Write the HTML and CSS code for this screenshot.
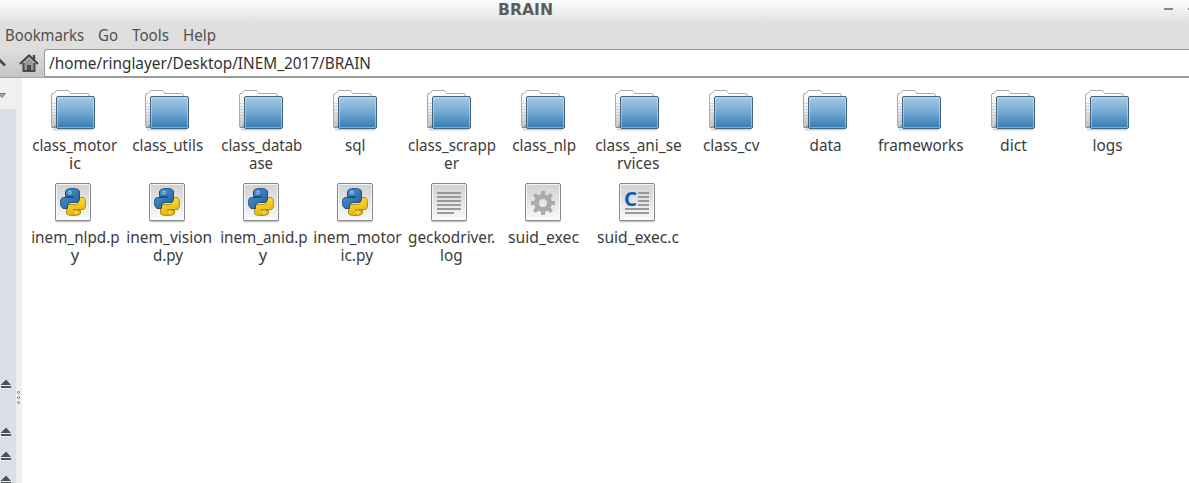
FILE: index.html
```html
<!DOCTYPE html>
<html lang="en">
<head>
<meta charset="utf-8">
<title>BRAIN</title>
<link rel="stylesheet" href="styles.css">
</head>
<body>
<svg class="defs" aria-hidden="true">
  <defs>
    <linearGradient id="blue" x2="0" y2="1"><stop offset="0" stop-color="#abcbe2"/><stop offset=".5" stop-color="#72a8d2"/><stop offset="1" stop-color="#337bb3"/></linearGradient>
    <linearGradient id="paper" x2="0" y2="1"><stop offset="0" stop-color="#d0d0d0"/><stop offset="1" stop-color="#fafafa"/></linearGradient>
    <linearGradient id="pyb" x2="1" y2="1"><stop offset="0" stop-color="#4b9ae0"/><stop offset="1" stop-color="#245a8d"/></linearGradient>
    <linearGradient id="pyy" x2=".3" y2="1"><stop offset="0" stop-color="#ffea3a"/><stop offset="1" stop-color="#e3b40e"/></linearGradient>
    <linearGradient id="tab" x2="0" y2="1"><stop offset="0" stop-color="#fff"/><stop offset=".4" stop-color="#f4f4f4"/><stop offset="1" stop-color="#c4c4c4"/></linearGradient>
  </defs>
  <symbol id="folder" viewBox="0 0 48 48">
    <path d="M4 41.400H44" stroke="#000" stroke-opacity=".18" stroke-width="2"/>
    <path d="M2.500 38V7Q2.500 5.500 4 5.500H5L6.500 3.500Q7 2.500 8 2.500H19Q20 2.500 20.500 3.500L21.500 5.500H38.500Q40.500 5.500 40.500 8V39.500H4Q2.500 39.500 2.500 38Z" fill="url(#tab)" stroke="#aaa"/>
    <path d="M3 15.500H7M3 18.500H7M3 21.500H7M3 24.500H7M3 27.500H7M3 30.500H7M3 33.500H7M3 36.500H7" stroke="#bbb" stroke-opacity=".5"/>
    <path d="M3 39.500Q7 40 7.500 36" fill="none" stroke="#777"/>
    <rect x="7.500" y="8.500" width="38" height="32" rx="1.500" fill="url(#blue)" stroke="#3f6482"/>
    <rect x="8.500" y="9.500" width="36" height="30" rx=".5" fill="none" stroke="#d5eaff" stroke-opacity=".45"/>
  </symbol>
  <symbol id="page" viewBox="0 0 48 48">
    <rect x="6" y="4" width="36" height="38.500" rx="2" fill="#000" opacity=".2"/>
    <rect x="6.500" y="3.500" width="35" height="37" rx="1.500" fill="url(#paper)" stroke="#858585"/>
    <rect x="7.500" y="4.500" width="33" height="35" rx=".5" fill="none" stroke="#fff" stroke-opacity=".75"/>
  </symbol>
  <symbol id="python" viewBox="0 0 48 48">
    <use href="#page"/>
    <path d="M29.500 17.500H34Q36.500 18 36.500 24Q36.500 29.500 34 29.500H24.500V30.500H31.500V33Q31.500 35.500 24 35.500Q17.500 35.500 17.500 33V28Q17.500 24.500 21 24.500H27Q29.500 24 29.500 21Z" fill="url(#pyy)" stroke="#b78b12"/>
    <path d="M18.500 28.500H14Q11.500 27 11.500 22.500Q11.500 17.500 14.500 17.500H24.500V16.500H16.500V12Q16.500 8.500 23.500 8.500Q30.500 8.500 30.500 12V19Q30.500 22.500 27 22.500H22Q18.500 23 18.500 26Z" fill="url(#pyb)" stroke="#1e4f7e"/>
    <circle cx="21" cy="12.500" r="1.400" fill="#3b7cb5" stroke="#b9dcf8" stroke-width=".9"/>
    <circle cx="27" cy="32" r="1.400" fill="#d5a50f" stroke="#fff08a" stroke-width=".9"/>
  </symbol>
  <symbol id="log" viewBox="0 0 48 48">
    <use href="#page"/>
    <path d="M12 13H36M12 17H36M12 21H36M12 25H36M12 29H36M12 33H29" stroke="#999" stroke-width="2"/>
  </symbol>
  <symbol id="gear" viewBox="0 0 48 48">
    <use href="#page"/>
    <g stroke="#aaa" stroke-width="4" transform="translate(24 23)">
      <path d="M0 -12V-6M0 12V6M-12 0H-6M12 0H6M-8.600 -8.600L-5 -5M8.600 8.600L5 5M8.600 -8.600L5 -5M-8.600 8.600L-5 5"/>
      <circle r="6.500" fill="none" stroke-width="5"/>
    </g>
  </symbol>
  <symbol id="eject" viewBox="0 0 11 10"><path d="M0 10V6L5.500 0L11 6V10Z" fill="#fff" opacity=".6"/><path d="M.5 6L6 .5L11 6ZM1 7H11V9H1Z" fill="#4d5155"/></symbol>
</svg>

<div class="window">
  <header class="chrome">
    <div class="titlebar">
      <svg class="title" viewBox="0 0 60 20"><text x="0" y="15" textLength="55" lengthAdjust="spacingAndGlyphs">BRAIN</text></svg>
      <span class="minimize"></span><span class="maximize"></span>
    </div>
    <svg class="menu" viewBox="0 0 240 28">
      <text x="5" y="21" textLength="79" lengthAdjust="spacingAndGlyphs">Bookmarks</text>
      <text x="98" y="21" textLength="20" lengthAdjust="spacingAndGlyphs">Go</text>
      <text x="132" y="21" textLength="37" lengthAdjust="spacingAndGlyphs">Tools</text>
      <text x="183" y="21" textLength="33" lengthAdjust="spacingAndGlyphs">Help</text>
    </svg>
  </header>
  <div class="toolbar">
    <svg class="nav" viewBox="0 0 44 28">
      <path d="M-5 16.500L0 11.500L5 16.500" fill="none" stroke="#4a4a4a" stroke-width="2.800"/>
      <path d="M23 15L29 9L35 15V22.500H31V17H27V22.500H23Z" fill="#999"/>
      <path d="M23.500 14V22H34.500V14" fill="none" stroke="#4a4a4a" stroke-width="2"/>
      <path d="M20 15L29 6.500L38 15M34 6V11" fill="none" stroke="#444" stroke-width="2.300"/>
      <path d="M27 22V16H31V22Z" fill="#4a4a4a"/>
    </svg>
    <div class="path"><svg viewBox="0 0 340 26"><text x="4" y="19" textLength="322" lengthAdjust="spacingAndGlyphs">/home/ringlayer/Desktop/INEM_2017/BRAIN</text></svg></div>
  </div>
  <div class="body">
    <aside class="side">
      <div class="side-head"><svg viewBox="0 0 16 31"><path d="M-1.500 15.500H5.500L2 19.500Z" fill="#aaa" stroke="#777"/></svg></div>
      <div class="places">
        <svg><use href="#eject"/></svg><svg><use href="#eject"/></svg><svg><use href="#eject"/></svg><svg><use href="#eject"/></svg>
      </div>
    </aside>
    <div class="splitter"><i></i><i></i><i></i></div>
    <main class="files">
      <figure><svg class="icon"><use href="#folder"/></svg><svg class="label"><text x="6.200" y="17" textLength="85" lengthAdjust="spacingAndGlyphs">class_motor</text><text x="43" y="35" textLength="12" lengthAdjust="spacingAndGlyphs">ic</text></svg></figure>
      <figure><svg class="icon"><use href="#folder"/></svg><svg class="label"><text x="12.200" y="17" textLength="71" lengthAdjust="spacingAndGlyphs">class_utils</text></svg></figure>
      <figure><svg class="icon"><use href="#folder"/></svg><svg class="label"><text x="7.300" y="17" textLength="81" lengthAdjust="spacingAndGlyphs">class_datab</text><text x="35" y="35" textLength="24" lengthAdjust="spacingAndGlyphs">ase</text></svg></figure>
      <figure><svg class="icon"><use href="#folder"/></svg><svg class="label"><text x="37" y="17" textLength="20.500" lengthAdjust="spacingAndGlyphs">sql</text></svg></figure>
      <figure><svg class="icon"><use href="#folder"/></svg><svg class="label"><text x="6" y="17" textLength="88" lengthAdjust="spacingAndGlyphs">class_scrapp</text><text x="42" y="35" textLength="15" lengthAdjust="spacingAndGlyphs">er</text></svg></figure>
      <figure><svg class="icon"><use href="#folder"/></svg><svg class="label"><text x="16.200" y="17" textLength="64" lengthAdjust="spacingAndGlyphs">class_nlp</text></svg></figure>
      <figure><svg class="icon"><use href="#folder"/></svg><svg class="label"><text x="5.200" y="17" textLength="86.500" lengthAdjust="spacingAndGlyphs">class_ani_se</text><text x="27" y="35" textLength="42.500" lengthAdjust="spacingAndGlyphs">rvices</text></svg></figure>
      <figure><svg class="icon"><use href="#folder"/></svg><svg class="label"><text x="19" y="17" textLength="56.500" lengthAdjust="spacingAndGlyphs">class_cv</text></svg></figure>
      <figure><svg class="icon"><use href="#folder"/></svg><svg class="label"><text x="31.500" y="17" textLength="32" lengthAdjust="spacingAndGlyphs">data</text></svg></figure>
      <figure><svg class="icon"><use href="#folder"/></svg><svg class="label"><text x="6" y="17" textLength="85.500" lengthAdjust="spacingAndGlyphs">frameworks</text></svg></figure>
      <figure><svg class="icon"><use href="#folder"/></svg><svg class="label"><text x="34" y="17" textLength="27" lengthAdjust="spacingAndGlyphs">dict</text></svg></figure>
      <figure><svg class="icon"><use href="#folder"/></svg><svg class="label"><text x="32.500" y="17" textLength="30" lengthAdjust="spacingAndGlyphs">logs</text></svg></figure>

      <figure><svg class="icon"><use href="#python"/></svg><svg class="label"><text x="5.200" y="17" textLength="88.500" lengthAdjust="spacingAndGlyphs">inem_nlpd.p</text><text x="44.700" y="35" textLength="8.500" lengthAdjust="spacingAndGlyphs">y</text></svg></figure>
      <figure><svg class="icon"><use href="#python"/></svg><svg class="label"><text x="6.200" y="17" textLength="86" lengthAdjust="spacingAndGlyphs">inem_vision</text><text x="33" y="35" textLength="30" lengthAdjust="spacingAndGlyphs">d.py</text></svg></figure>
      <figure><svg class="icon"><use href="#python"/></svg><svg class="label"><text x="6.200" y="17" textLength="87.500" lengthAdjust="spacingAndGlyphs">inem_anid.p</text><text x="44.700" y="35" textLength="8.500" lengthAdjust="spacingAndGlyphs">y</text></svg></figure>
      <figure><svg class="icon"><use href="#python"/></svg><svg class="label"><text x="5.200" y="17" textLength="88.500" lengthAdjust="spacingAndGlyphs">inem_motor</text><text x="32.500" y="35" textLength="32.500" lengthAdjust="spacingAndGlyphs">ic.py</text></svg></figure>
      <figure><svg class="icon"><use href="#log"/></svg><svg class="label"><text x="6" y="17" textLength="87" lengthAdjust="spacingAndGlyphs">geckodriver.</text><text x="38" y="35" textLength="22.500" lengthAdjust="spacingAndGlyphs">log</text></svg></figure>
      <figure><svg class="icon"><use href="#gear"/></svg><svg class="label"><text x="12" y="17" textLength="71" lengthAdjust="spacingAndGlyphs">suid_exec</text></svg></figure>
      <figure>
        <svg class="icon" viewBox="0 0 48 48">
          <use href="#page"/>
          <path d="M25 13H36M25 17H36M25 21H36M25 25H36M12 29H36M12 33H36" stroke="#999" stroke-width="2"/>
          <text class="c-letter" x="11" y="25.500" textLength="13" lengthAdjust="spacingAndGlyphs">C</text>
        </svg>
        <svg class="label"><text x="7" y="17" textLength="82" lengthAdjust="spacingAndGlyphs">suid_exec.c</text></svg>
      </figure>
    </main>
  </div>
</div>
</body>
</html>
```
FILE: styles.css
```css
* { box-sizing: border-box; }
body { margin: 0; font: 16px "Noto Sans", sans-serif; }
.defs { position: absolute; width: 0; height: 0; }
svg { display: block; }
.window { width: 1189px; height: 483px; overflow: hidden; display: flex; flex-direction: column; background: #fff; }
.chrome { height: 49px; background: linear-gradient(#fcfcfc, #dfdfdf 24px, #dedede); }
.titlebar { height: 20px; display: flex; }
.title { width: 60px; height: 20px; margin-left: 498px; margin-right: 606px; font: bold 16px "DejaVu Sans", sans-serif; fill: #5c5c5c; }
.minimize { width: 9px; height: 2px; margin-top: 8px; background: #888; }
.maximize { width: 1px; height: 2px; margin: 8px 0 0 15px; background: #888; }
.menu { width: 240px; height: 28px; fill: #505050; }
.toolbar { height: 29px; display: flex; background: linear-gradient(#dedede, #c4c4c4); border-bottom: 1px solid #a5a5a5; }
.nav { width: 44px; height: 28px; }
.path { flex: 1; height: 29px; background: #fff; border: 1px solid #999; border-bottom-width: 2px; border-right: 0; border-radius: 3px 0 0 3px; }
.path svg { width: 340px; height: 26px; fill: #333; }
.body { flex: 1; min-height: 0; display: flex; }
.side { width: 16px; display: flex; flex-direction: column; }
.side-head { height: 31px; background: #f1f0ef; }
.side-head svg { width: 16px; height: 31px; }
.places { flex: 1; min-height: 0; overflow: hidden; padding-top: 270px; background: #d9dee7; }
.places svg { width: 11px; height: 10px; margin-bottom: 14px; }
.places svg:first-child { margin-bottom: 38px; }
.splitter { width: 6px; padding: 313px 0 0 1px; background: #f1f0ef; }
.splitter i { display: block; width: 3px; height: 3px; margin-bottom: 2px; border: 1px solid #777; border-radius: 50%; background: #fff; }
.files { flex: 1; display: grid; grid-template-columns: repeat(12, 94px); grid-auto-rows: 92px; padding: 10px 0 0 4px; align-content: start; }
figure { margin: 0; }
.icon { width: 48px; height: 48px; margin-left: 23px; }
.label { width: 94px; height: 44px; margin-top: -2px; fill: #3c3c3c; overflow: visible; }
.c-letter { font: bold 19px "Noto Sans", sans-serif; fill: #0b5cba; }
```
